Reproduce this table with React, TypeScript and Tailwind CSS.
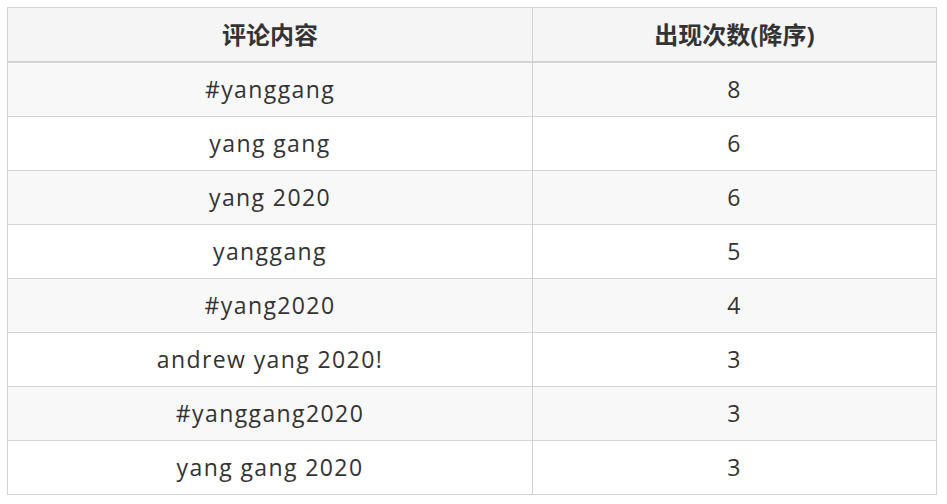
import React from "react";

const rows: [string, string][] = [
  ["#yanggang", "8"],
  ["yang gang", "6"],
  ["yang 2020", "6"],
  ["yanggang", "5"],
  ["#yang2020", "4"],
  ["andrew yang 2020!", "3"],
  ["#yanggang2020", "3"],
  ["yang gang 2020", "3"],
];

export default function App() {
  return (
    <div
      className="w-[947px] h-[504px] bg-white pt-[7px] pl-[7px] text-[#333333]"
      style={{ fontFamily: '"Open Sans", "Noto Sans CJK SC", sans-serif' }}
    >
      <div className="w-[930px] border border-[#d3d3d3]">
        <div className="grid grid-cols-[524px_1fr] h-[53px] bg-[#f5f5f5] font-bold text-[24px]">
          <div className="flex items-center justify-center">评论内容</div>
          <div className="flex items-center justify-center border-l border-[#d3d3d3]">出现次数(降序)</div>
        </div>
        {rows.map(([a, b], i) => (
          <div
            key={i}
            className={
              "grid grid-cols-[524px_1fr] h-[54px] text-[23px] tracking-[1.4px] border-[#d3d3d3] " +
              (i === 0 ? "border-t-2 h-[55px] " : "border-t ") +
              (i % 2 === 0 ? "bg-[#f8f8f8]" : "bg-white")
            }
          >
            <div className="flex items-center justify-center">{a}</div>
            <div className="flex items-center justify-center border-l border-[#d3d3d3]">{b}</div>
          </div>
        ))}
      </div>
    </div>
  );
}
